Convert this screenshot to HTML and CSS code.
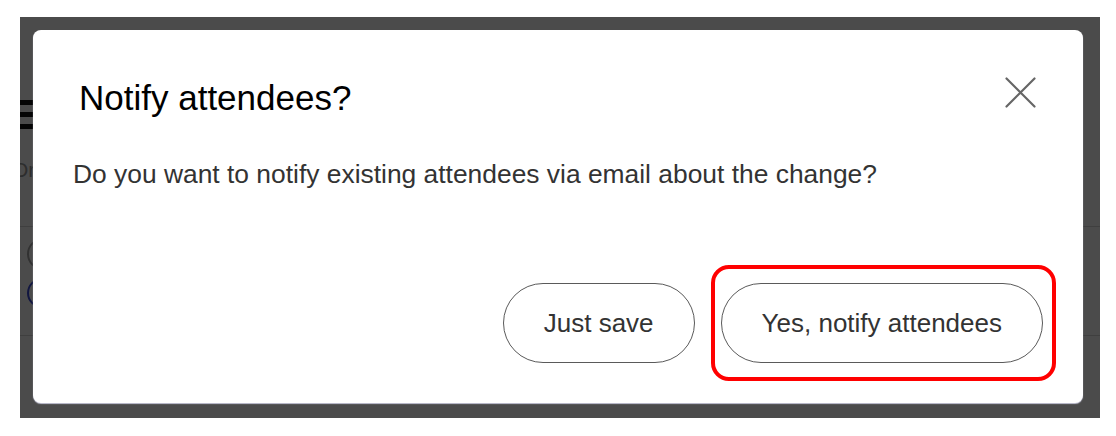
FILE: index.html
```html
<!DOCTYPE html>
<html lang="en">
<head>
  <meta charset="UTF-8" />
  <meta name="viewport" content="width=device-width, initial-scale=1.0"/>
  <title>Notify attendees</title>
  <link rel="stylesheet" href="styles.css">
</head>
<body>
  <div class="frame">
    <div class="page">
      <div class="page-menu">
        <span></span>
        <span></span>
        <span></span>
      </div>
      <p class="page-or">Or</p>
      <div class="page-row">
        <span class="page-dot"></span>
        <span class="page-dot page-dot-blue"></span>
      </div>
    </div>

    <div class="backdrop">
      <div class="modal" role="dialog" aria-labelledby="modalTitle">
        <div class="modal-header">
          <h2 id="modalTitle">Notify attendees?</h2>
          <button class="close" aria-label="Close">
            <svg width="31" height="31" viewBox="0 0 31 31">
              <path d="M1.5 1.5L29.5 29.5M29.5 1.5L1.5 29.5" stroke="#666" stroke-width="2.2" stroke-linecap="round" fill="none"/>
            </svg>
          </button>
        </div>
        <p class="modal-text">Do you want to notify existing attendees via email about the change?</p>
        <div class="modal-actions">
          <button class="btn">Just save</button>
          <span class="highlight">
            <button class="btn">Yes, notify attendees</button>
          </span>
        </div>
      </div>
    </div>
  </div>
</body>
</html>
```

FILE: styles.css
```css
body {
  margin: 0;
  background-color: #ffffff;
  font-family: 'Liberation Sans', Arial, Helvetica, sans-serif;
}

.frame {
  position: relative;
  overflow: hidden;
  margin: 17px 16px 18px 20px;
  height: 401px;
  background-color: #ffffff;
}

/* page behind the dialog, only a sliver shows on the left */
.page {
  padding-top: 83px;
}

.page-menu {
  display: flex;
  flex-direction: column;
  gap: 7px;
  width: 26px;
}

.page-menu span {
  display: block;
  height: 5px;
  background-color: #111;
}

.page-or {
  margin: 29px 0 0 -8px;
  font-size: 21px;
  line-height: 24px;
  color: #9a9a9a;
}

.page-row {
  display: flex;
  flex-direction: column;
  gap: 8px;
  margin-top: 44px;
  padding: 11px 0 27px 7px;
  border-top: 1px solid #d6d6d6;
  border-bottom: 1px solid #d6d6d6;
}

.page-dot {
  display: block;
  width: 28px;
  height: 28px;
  border: 2px solid #a8a8a8;
  border-radius: 50%;
}

.page-dot-blue {
  width: 26px;
  height: 26px;
  border-color: #3b4bd8;
}

.backdrop {
  position: absolute;
  top: 0;
  left: 0;
  right: 0;
  bottom: 0;
  display: flex;
  padding: 13px 17px 15px 13px;
  background-color: rgba(0, 0, 0, 0.706);
}

.modal {
  flex: 1;
  background-color: #ffffff;
  border-radius: 8px;
  box-shadow: 0 1px 1px rgba(210, 210, 230, 0.9);
}

.modal-header {
  display: flex;
  justify-content: space-between;
  align-items: flex-start;
  padding: 48px 47px 0 46px;
}

.modal-header h2 {
  margin: 0;
  font-size: 35px;
  line-height: 40px;
  font-weight: normal;
  color: #000;
}

.close {
  display: flex;
  margin-top: -1px;
  padding: 0;
  border: none;
  background: none;
  cursor: pointer;
}

.modal-text {
  margin: 41px 40px 0;
  font-size: 26.4px;
  line-height: 30px;
  color: #333;
}

.modal-actions {
  display: flex;
  justify-content: flex-end;
  align-items: center;
  gap: 16px;
  margin-top: 76px;
  padding: 0 27px 22px 0;
}

.btn {
  box-sizing: border-box;
  height: 80px;
  padding: 0 40px;
  border: 1.5px solid #5a5a5a;
  border-radius: 40px;
  background-color: #fff;
  font-family: inherit;
  font-size: 26px;
  color: #333;
  cursor: pointer;
}

/* red annotation box round the main action */
.highlight {
  display: flex;
  padding: 14px 9px 14px 6px;
  border: 4px solid #ff0000;
  border-radius: 18px;
}
```
